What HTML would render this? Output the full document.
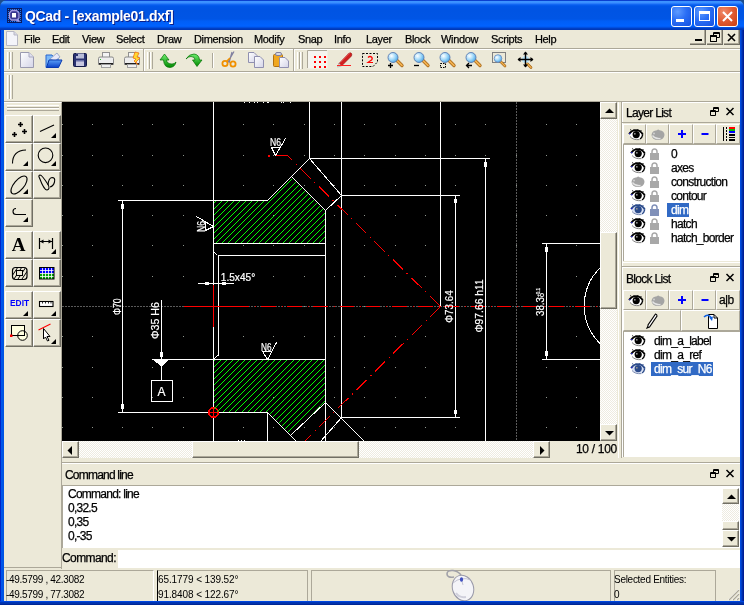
<!DOCTYPE html>
<html><head><meta charset="utf-8">
<style>
*{box-sizing:border-box}
html,body{margin:0;padding:0}
body{width:744px;height:605px;overflow:hidden;position:relative;background:#ECE9D8;font-family:"Liberation Sans",sans-serif;font-size:11px;color:#000}
.a{position:absolute}
.t{position:absolute;white-space:nowrap;line-height:13px;letter-spacing:-0.35px;will-change:transform;-webkit-text-stroke:0.25px currentColor}
.btn{position:absolute;width:28px;height:28px;background:#ECE9D8;border-top:1px solid #fff;border-left:1px solid #fff;border-right:1px solid #8F8C80;border-bottom:1px solid #8F8C80}
.hl{background:#FFF}
.dith{background-color:#EEEBE0;background-image:linear-gradient(45deg,#fff 25%,transparent 25%,transparent 75%,#fff 75%),linear-gradient(45deg,#fff 25%,transparent 25%,transparent 75%,#fff 75%);background-size:2px 2px;background-position:0 0,1px 1px}
.sbb{background:#ECE9D8;border-top:1px solid #fff;border-left:1px solid #fff;border-right:1px solid #716F64;border-bottom:1px solid #716F64;box-shadow:inset -1px -1px 0 #ACA899}
.sbt{background:#ECE9D8;border-top:1px solid #fff;border-left:1px solid #fff;border-right:1px solid #ACA899;border-bottom:1px solid #ACA899}
.lb{position:absolute;width:28px;height:28px;border-top:1px solid #fff;border-left:1px solid #fff;border-right:1px solid #716F64;border-bottom:1px solid #716F64;box-shadow:inset -1px -1px 0 #ACA899}
.sep{position:absolute;background:#ACA899}
</style></head><body>
<!-- window frame -->
<div class="a" style="left:0;top:0;width:744px;height:8px;background:#1C4C8C"></div>
<div class="a" style="left:0;top:0;width:744px;height:30px;border-radius:7px 7px 0 0;background:linear-gradient(#0A3FD0 0px,#0A3FD0 1px,#3D95FF 1px,#3A8EFF 3px,#1A6CF6 4px,#0860F0 5px,#0056E8 6px,#0054E3 10px,#0055E5 19px,#005EF6 21px,#0062FF 26px,#0058F0 27px,#0046D0 28px,#0038B8 29px,#0038B8 30px)"></div>
<div class="a" style="left:0;top:30px;width:4px;height:575px;background:linear-gradient(90deg,#0024C8 0,#0024C8 1px,#0058EE 1px,#0053E0 4px)"></div>
<div class="a" style="left:740px;top:30px;width:4px;height:575px;background:linear-gradient(90deg,#0050E8 0,#0048D8 1px,#0036B8 2px,#00249A 3px,#001890 4px)"></div>
<div class="a" style="left:0;top:601px;width:744px;height:4px;background:linear-gradient(#0046E0 0,#0046E0 1px,#0038B8 1px,#0030A8 3px,#001C80 4px)"></div>

<!-- title -->
<svg class="a" style="left:7px;top:8px" width="15" height="15"><rect width="15" height="15" fill="#0A1A60"/><rect x="1" y="1" width="1" height="1" fill="#1E78F0"/><rect x="1" y="3" width="1" height="1" fill="#1E78F0"/><rect x="1" y="5" width="1" height="1" fill="#1E78F0"/><rect x="1" y="7" width="1" height="1" fill="#1E78F0"/><rect x="1" y="9" width="1" height="1" fill="#1E78F0"/><rect x="1" y="11" width="1" height="1" fill="#1E78F0"/><rect x="1" y="13" width="1" height="1" fill="#1E78F0"/><rect x="3" y="1" width="1" height="1" fill="#1E78F0"/><rect x="3" y="3" width="1" height="1" fill="#1E78F0"/><rect x="3" y="5" width="1" height="1" fill="#1E78F0"/><rect x="3" y="7" width="1" height="1" fill="#1E78F0"/><rect x="3" y="9" width="1" height="1" fill="#1E78F0"/><rect x="3" y="11" width="1" height="1" fill="#1E78F0"/><rect x="3" y="13" width="1" height="1" fill="#1E78F0"/><rect x="5" y="1" width="1" height="1" fill="#1E78F0"/><rect x="5" y="3" width="1" height="1" fill="#1E78F0"/><rect x="5" y="5" width="1" height="1" fill="#1E78F0"/><rect x="5" y="7" width="1" height="1" fill="#1E78F0"/><rect x="5" y="9" width="1" height="1" fill="#1E78F0"/><rect x="5" y="11" width="1" height="1" fill="#1E78F0"/><rect x="5" y="13" width="1" height="1" fill="#1E78F0"/><rect x="7" y="1" width="1" height="1" fill="#1E78F0"/><rect x="7" y="3" width="1" height="1" fill="#1E78F0"/><rect x="7" y="5" width="1" height="1" fill="#1E78F0"/><rect x="7" y="7" width="1" height="1" fill="#1E78F0"/><rect x="7" y="9" width="1" height="1" fill="#1E78F0"/><rect x="7" y="11" width="1" height="1" fill="#1E78F0"/><rect x="7" y="13" width="1" height="1" fill="#1E78F0"/><rect x="9" y="1" width="1" height="1" fill="#1E78F0"/><rect x="9" y="3" width="1" height="1" fill="#1E78F0"/><rect x="9" y="5" width="1" height="1" fill="#1E78F0"/><rect x="9" y="7" width="1" height="1" fill="#1E78F0"/><rect x="9" y="9" width="1" height="1" fill="#1E78F0"/><rect x="9" y="11" width="1" height="1" fill="#1E78F0"/><rect x="9" y="13" width="1" height="1" fill="#1E78F0"/><rect x="11" y="1" width="1" height="1" fill="#1E78F0"/><rect x="11" y="3" width="1" height="1" fill="#1E78F0"/><rect x="11" y="5" width="1" height="1" fill="#1E78F0"/><rect x="11" y="7" width="1" height="1" fill="#1E78F0"/><rect x="11" y="9" width="1" height="1" fill="#1E78F0"/><rect x="11" y="11" width="1" height="1" fill="#1E78F0"/><rect x="11" y="13" width="1" height="1" fill="#1E78F0"/><rect x="13" y="1" width="1" height="1" fill="#1E78F0"/><rect x="13" y="3" width="1" height="1" fill="#1E78F0"/><rect x="13" y="5" width="1" height="1" fill="#1E78F0"/><rect x="13" y="7" width="1" height="1" fill="#1E78F0"/><rect x="13" y="9" width="1" height="1" fill="#1E78F0"/><rect x="13" y="11" width="1" height="1" fill="#1E78F0"/><rect x="13" y="13" width="1" height="1" fill="#1E78F0"/>
<path d="M4.5 2.5 H9.5 L12 5 V10 L10.5 11.5 L12 13 L10.5 13 L9.5 12 H4.5 L2.5 10 V5 Z" fill="#3A3890" stroke="#A098E0" stroke-width="1.3"/>
<rect x="5" y="5" width="4" height="4.5" fill="#FFFFFF"/></svg>
<div class="t" style="left:25px;top:8px;font-size:14px;font-weight:bold;color:#fff;letter-spacing:-0.33px;line-height:16px;-webkit-text-stroke:0;text-shadow:1px 1px 0 #0A1E8A">QCad - [example01.dxf]</div>
<!-- title buttons -->
<div class="a" style="left:671px;top:6px;width:21px;height:21px;border:1px solid #fff;border-radius:3px;background:radial-gradient(circle at 30% 25%,#5E9BFF 0,#2A6EF5 45%,#1450E0 100%)"><div class="a" style="left:4px;top:12px;width:8px;height:3px;background:#fff"></div></div>
<div class="a" style="left:694px;top:6px;width:21px;height:21px;border:1px solid #fff;border-radius:3px;background:radial-gradient(circle at 30% 25%,#5E9BFF 0,#2A6EF5 45%,#1450E0 100%)"><div class="a" style="left:4px;top:4px;width:11px;height:10px;border:1px solid #fff;border-top-width:3px"></div></div>
<div class="a" style="left:717px;top:6px;width:21px;height:21px;border:1px solid #fff;border-radius:3px;background:radial-gradient(circle at 30% 25%,#F08A6A 0,#E05A30 50%,#C83E10 100%)">
<svg class="a" style="left:0;top:0" width="19" height="19"><path d="M5 5 L14 14 M14 5 L5 14" stroke="#fff" stroke-width="2"/></svg></div>
<!-- menubar -->
<div class="a" style="left:4px;top:48px;width:736px;height:1px;background:#ACA899"></div>
<div class="a" style="left:4px;top:49px;width:736px;height:1px;background:#fff"></div>
<svg class="a" style="left:5px;top:31px" width="14" height="15"><path d="M1.5 0.5 H9 L12.5 4 V14.5 H1.5 Z" fill="#F4F4FA" stroke="#B8B8C4"/><path d="M9 0.5 V4 H12.5" fill="#D8D8E8" stroke="#B8B8C4"/></svg>
<div class="t" style="left:24px;top:33px">File</div>
<div class="t" style="left:52px;top:33px">Edit</div>
<div class="t" style="left:82px;top:33px">View</div>
<div class="t" style="left:116px;top:33px">Select</div>
<div class="t" style="left:157px;top:33px">Draw</div>
<div class="t" style="left:194px;top:33px">Dimension</div>
<div class="t" style="left:254px;top:33px">Modify</div>
<div class="t" style="left:298px;top:33px">Snap</div>
<div class="t" style="left:334px;top:33px">Info</div>
<div class="t" style="left:366px;top:33px">Layer</div>
<div class="t" style="left:405px;top:33px">Block</div>
<div class="t" style="left:441px;top:33px">Window</div>
<div class="t" style="left:491px;top:33px">Scripts</div>
<div class="t" style="left:535px;top:33px">Help</div>
<!-- mdi buttons -->
<div class="a" style="left:690px;top:30px;width:16px;height:15px;border-right:1px solid #716F64;border-bottom:1px solid #716F64;box-shadow:inset -1px -1px 0 #ACA899"><div class="a" style="left:5px;top:9px;width:7px;height:2px;background:#000"></div></div>
<div class="a" style="left:707px;top:30px;width:16px;height:15px;border-right:1px solid #716F64;border-bottom:1px solid #716F64;box-shadow:inset -1px -1px 0 #ACA899">
<svg class="a" style="left:3px;top:2px" width="10" height="10"><path d="M3.5 0.5h6v5h-6z M3.5 1.5h6 M0.5 3.5h6v6h-6z M0.5 4.5h6" fill="none" stroke="#000"/><rect x="1" y="5" width="5" height="4" fill="#ECE9D8"/><path d="M0.5 3.5h6v6h-6z M0.5 4.5h6" fill="none" stroke="#000"/></svg></div>
<div class="a" style="left:724px;top:30px;width:16px;height:15px;border-right:1px solid #716F64;border-bottom:1px solid #716F64;box-shadow:inset -1px -1px 0 #ACA899">
<svg class="a" style="left:3px;top:3px" width="10" height="9"><path d="M1 1 L8 8 M8 1 L1 8" stroke="#000" stroke-width="1.6"/></svg></div>
<!-- toolbar rows -->
<div class="a" style="left:4px;top:71px;width:736px;height:1px;background:#ACA899"></div>
<div class="a" style="left:4px;top:72px;width:736px;height:1px;background:#fff"></div>
<div class="a" style="left:4px;top:101px;width:736px;height:1px;background:#ACA899"></div>
<!-- handles -->
<div class="a" style="left:7px;top:52px;width:3px;height:17px;border-left:1px solid #fff;border-right:1px solid #ACA899"></div>
<div class="a" style="left:10px;top:52px;width:3px;height:17px;border-left:1px solid #fff;border-right:1px solid #ACA899"></div>
<div class="a" style="left:7px;top:75px;width:3px;height:24px;border-left:1px solid #fff;border-right:1px solid #ACA899"></div>
<div class="a" style="left:10px;top:75px;width:3px;height:24px;border-left:1px solid #fff;border-right:1px solid #ACA899"></div>
<div class="a" style="left:143px;top:49px;width:1px;height:22px;background:#ACA899"></div>
<div class="a" style="left:144px;top:49px;width:1px;height:22px;background:#fff"></div>
<div class="a" style="left:147px;top:52px;width:3px;height:17px;border-left:1px solid #fff;border-right:1px solid #ACA899"></div>
<div class="a" style="left:150px;top:52px;width:3px;height:17px;border-left:1px solid #fff;border-right:1px solid #ACA899"></div>
<div class="a" style="left:212px;top:53px;width:1px;height:15px;background:#ACA899"></div>
<div class="a" style="left:213px;top:53px;width:1px;height:15px;background:#fff"></div>
<div class="a" style="left:293px;top:49px;width:1px;height:22px;background:#ACA899"></div>
<div class="a" style="left:294px;top:49px;width:1px;height:22px;background:#fff"></div>
<div class="a" style="left:297px;top:52px;width:3px;height:17px;border-left:1px solid #fff;border-right:1px solid #ACA899"></div>
<div class="a" style="left:300px;top:52px;width:3px;height:17px;border-left:1px solid #fff;border-right:1px solid #ACA899"></div>

<!-- toolbar icons -->
<svg class="a" style="left:0;top:49px" width="744" height="22">
<defs>
<linearGradient id="gdoc" x1="0" y1="0" x2="1" y2="1"><stop offset="0" stop-color="#FFFFFF"/><stop offset="1" stop-color="#D4D4E8"/></linearGradient>
<linearGradient id="gblue" x1="0" y1="0" x2="0" y2="1"><stop offset="0" stop-color="#5AA0F8"/><stop offset="1" stop-color="#0A40C8"/></linearGradient>
<radialGradient id="glens" cx="0.35" cy="0.35" r="0.7"><stop offset="0" stop-color="#FFFFFF"/><stop offset="0.5" stop-color="#A8DCFA"/><stop offset="1" stop-color="#4AA8E8"/></radialGradient>
<linearGradient id="ggreen" x1="0" y1="0" x2="0" y2="1"><stop offset="0" stop-color="#70F070"/><stop offset="1" stop-color="#008800"/></linearGradient>
</defs>
<!-- new -->
<path d="M20.5 3.5 H29 L33.5 8 V18.5 H20.5 Z" fill="url(#gdoc)" stroke="#9A9AB0"/><path d="M29 3.5 V8 H33.5" fill="#E0E0F0" stroke="#A8A8C0"/>
<!-- open -->
<path d="M46 6 H52 L53 7.5 H58 V18.5 H46 Z" fill="#7AB8F8" stroke="#2A66D0"/>
<path d="M50 10 L57 4 L60 8 L55 12 Z" fill="#E8E8F8" stroke="#8A9AC0" stroke-width="0.8"/>
<path d="M46.5 18.5 L49 11 H62 L58.5 18.5 Z" fill="url(#gblue)" stroke="#0A3AB0"/>
<!-- save -->
<rect x="73.5" y="4.5" width="13" height="13" rx="1" fill="#2A3270" stroke="#141A48"/>
<rect x="76" y="4.5" width="8" height="5" fill="#B8BCD8"/><rect x="76" y="5" width="2" height="2" fill="#2A3270"/>
<rect x="76" y="11" width="8" height="6" fill="#C8C8E0"/><rect x="76" y="11" width="8" height="1.5" fill="#6A70A8"/>
<!-- print -->
<rect x="102.5" y="3.5" width="7" height="5" fill="#F4F4F4" stroke="#909090"/>
<path d="M98.5 9.5 Q98.5 8 100 8 H112 Q113.5 8 113.5 9.5 V15.5 H98.5 Z" fill="#EEEEEE" stroke="#8A8A8A"/>
<rect x="99" y="14" width="14" height="1.6" fill="#202020"/>
<rect x="101.5" y="15.5" width="9" height="3" fill="#F0F0F0" stroke="#A0A0A0"/>
<rect x="100" y="10" width="1" height="1" fill="#30C030"/>
<!-- print preview -->
<rect x="128.5" y="3.5" width="7" height="5" fill="#F4F4F4" stroke="#909090"/>
<path d="M124.5 9.5 Q124.5 8 126 8 H138 Q139.5 8 139.5 9.5 V15.5 H124.5 Z" fill="#EEEEEE" stroke="#8A8A8A"/>
<rect x="125" y="14" width="14" height="1.6" fill="#202020"/>
<rect x="127.5" y="15.5" width="9" height="3" fill="#F0F0F0" stroke="#A0A0A0"/>
<path d="M135 3 L139 4 L137 8 L140 9 L136 13 L138 16 L134 12 L136 10 L133 9 Z" fill="#FFD830" stroke="#F07010" stroke-width="0.8"/>
<!-- undo -->
<path d="M160 11 L164.5 5 L169 11 H166.5 Q167 15 172 15 Q174.5 15 176 13 Q175 18 170 18.5 Q164 18.5 163.5 11 Z" fill="url(#ggreen)" stroke="#007000" stroke-width="0.7"/>
<!-- redo -->
<path d="M186 10 Q189 5 194 5 Q199 5.5 199.5 11 H202 L197 17.5 L192.5 11 H195 Q195 7.5 191 7.5 Q188 7.5 186 10 Z" fill="url(#ggreen)" stroke="#007000" stroke-width="0.7"/>
<!-- cut -->
<path d="M228 13 L234 2.5 M229 14 L232 3" stroke="#8080A0" stroke-width="1.2"/>
<circle cx="225" cy="14.5" r="2.6" fill="none" stroke="#F09000" stroke-width="1.8"/>
<circle cx="233" cy="15" r="2.6" fill="none" stroke="#F09000" stroke-width="1.8"/>
<path d="M226.5 12.5 L230 9" stroke="#F09000" stroke-width="1.6"/>
<!-- copy -->
<path d="M248.5 3.5 H254 L257 6.5 V13.5 H248.5 Z" fill="url(#gdoc)" stroke="#9090B0"/>
<path d="M254.5 7.5 H260 L263.5 11 V18.5 H254.5 Z" fill="url(#gdoc)" stroke="#9090B0"/>
<!-- paste -->
<rect x="273.5" y="5.5" width="9" height="12" rx="1" fill="#F0A820" stroke="#B07010"/>
<rect x="275.5" y="3.5" width="6" height="3" rx="1.5" fill="#D8D8E0" stroke="#8080A0"/>
<path d="M279.5 8.5 H285 L288.5 12 V18.5 H279.5 Z" fill="url(#gdoc)" stroke="#9090B0"/>
<!-- grid pressed -->
<rect x="307.5" y="1.5" width="20" height="18" fill="#F6F5F0" stroke="none"/>
<path d="M307.5 19 V1.5 H327" fill="none" stroke="#ACA899"/>
<g fill="#FF0000"><rect x="314" y="7" width="2" height="2"/><rect x="314" y="12" width="2" height="2"/><rect x="314" y="17" width="2" height="2"/><rect x="319" y="7" width="2" height="2"/><rect x="319" y="12" width="2" height="2"/><rect x="319" y="17" width="2" height="2"/><rect x="324" y="7" width="2" height="2"/><rect x="324" y="12" width="2" height="2"/><rect x="324" y="17" width="2" height="2"/></g>
<!-- draft pen -->
<path d="M339 14.5 L348.5 4.5 Q350.5 3 351.5 4.5 Q352.5 6 351 7.5 L341.5 17 Z" fill="#D02020" stroke="#901010" stroke-width="0.6"/>
<path d="M340 13.5 L349.5 4" stroke="#F08080" stroke-width="0.8"/>
<path d="M339 14.5 L341.5 17 L337.5 18 Z" fill="#F0F0F0" stroke="#909090" stroke-width="0.5"/>
<rect x="337" y="16" width="14" height="1" fill="#FF2020"/>
<!-- redraw -->
<path d="M362.5 4.5 H377.5 V13 L373 17.5 H362.5 Z" fill="none" stroke="#000" stroke-dasharray="2 1.5"/>
<path d="M368 8.5 Q370 6.5 372 8.5 Q373 10.5 370 12 L368 13.5 H373" fill="none" stroke="#FF0000" stroke-width="1.2"/>
<!-- zoom lenses -->
<g>
<path d="M396.5 11 L402 16.5" stroke="#A06010" stroke-width="3.2" stroke-linecap="round"/><path d="M396.5 11 L402 16.5" stroke="#F0B050" stroke-width="1.8" stroke-linecap="round"/>
<circle cx="393" cy="8.5" r="5" fill="url(#glens)" stroke="#5A7AB0" stroke-width="0.9"/>
<path d="M388 16.5 H393 M390.5 14 V19" stroke="#000" stroke-width="1.3"/>
</g>
<g>
<path d="M422.5 11 L428 16.5" stroke="#A06010" stroke-width="3.2" stroke-linecap="round"/><path d="M422.5 11 L428 16.5" stroke="#F0B050" stroke-width="1.8" stroke-linecap="round"/>
<circle cx="419" cy="8.5" r="5" fill="url(#glens)" stroke="#5A7AB0" stroke-width="0.9"/>
<path d="M414 16.5 H419" stroke="#000" stroke-width="1.3"/>
</g>
<g>
<path d="M448.5 11 L454 16.5" stroke="#A06010" stroke-width="3.2" stroke-linecap="round"/><path d="M448.5 11 L454 16.5" stroke="#F0B050" stroke-width="1.8" stroke-linecap="round"/>
<circle cx="445" cy="8.5" r="5" fill="url(#glens)" stroke="#5A7AB0" stroke-width="0.9"/>
<rect x="440.5" y="14.5" width="5" height="4" fill="none" stroke="#000" stroke-dasharray="1.5 1"/>
</g>
<g>
<path d="M474.5 11 L480 16.5" stroke="#A06010" stroke-width="3.2" stroke-linecap="round"/><path d="M474.5 11 L480 16.5" stroke="#F0B050" stroke-width="1.8" stroke-linecap="round"/>
<circle cx="471" cy="8.5" r="5" fill="url(#glens)" stroke="#5A7AB0" stroke-width="0.9"/>
<path d="M466.5 16.5 H472 M469 14 L466.5 16.5 L469 19" stroke="#000" stroke-width="1.3" fill="none"/>
</g>
<g>
<rect x="492.5" y="3.5" width="13" height="10" fill="none" stroke="#808080"/>
<path d="M500 12 L505 17" stroke="#A06010" stroke-width="2.6" stroke-linecap="round"/><path d="M500 12 L505 17" stroke="#F0B050" stroke-width="1.4" stroke-linecap="round"/>
<circle cx="498" cy="9.5" r="3.8" fill="url(#glens)" stroke="#6A8AC0" stroke-width="0.8"/>
</g>
<g>
<path d="M526 13.5 L531 18.5" stroke="#A06010" stroke-width="2.6" stroke-linecap="round"/><path d="M526 13.5 L531 18.5" stroke="#F0B050" stroke-width="1.4" stroke-linecap="round"/>
<circle cx="525.5" cy="10.5" r="3.5" fill="#B8E4FA"/>
<path d="M525.5 3 V18 M518 10.5 H533" stroke="#000" stroke-width="1.4"/>
<path d="M523 5.5 L525.5 2.5 L528 5.5 Z M523 15.5 L525.5 18.5 L528 15.5 Z M520.5 8 L517.5 10.5 L520.5 13 Z M530.5 8 L533.5 10.5 L530.5 13 Z" fill="#000"/>
</g>
</svg>

<!-- left dock -->
<div class="a" style="left:4px;top:102px;width:58px;height:466px;border-top:1px solid #fff;border-right:1px solid #ACA899;border-bottom:1px solid #ACA899"></div>
<div class="a" style="left:7px;top:105px;width:52px;height:3px;border-top:1px solid #fff;border-bottom:1px solid #ACA899"></div>
<div class="a" style="left:7px;top:108px;width:52px;height:3px;border-top:1px solid #fff;border-bottom:1px solid #ACA899"></div>

<!-- left toolbar buttons -->
<div class="a lb" style="left:5px;top:115px"></div>
<div class="a lb" style="left:33px;top:115px"></div>
<div class="a lb" style="left:5px;top:143px"></div>
<div class="a lb" style="left:33px;top:143px"></div>
<div class="a lb" style="left:5px;top:171px"></div>
<div class="a lb" style="left:33px;top:171px"></div>
<div class="a lb" style="left:5px;top:199px"></div>
<div class="a lb" style="left:5px;top:231px"></div>
<div class="a lb" style="left:33px;top:231px"></div>
<div class="a lb" style="left:5px;top:259px"></div>
<div class="a lb" style="left:33px;top:259px"></div>
<div class="a lb" style="left:5px;top:291px"></div>
<div class="a lb" style="left:33px;top:291px"></div>
<div class="a lb" style="left:5px;top:319px"></div>
<div class="a lb" style="left:33px;top:319px"></div>
<svg class="a" style="left:0;top:0" width="62" height="350"><g stroke="#000" stroke-width="1.6" fill="none"><path d="M18.0 124.5 H23.0 M20.5 122.0 V127.0"/><path d="M22.0 131.5 H27.0 M24.5 129.0 V134.0"/><path d="M12.0 134.5 H17.0 M14.5 132.0 V137.0"/></g><g stroke="#000" stroke-width="1.1" fill="none"><path d="M40 131.5 L54 125"/><path d="M12.5 163.5 Q12.5 150.5 26 150"/><circle cx="45.5" cy="155.3" r="7.3"/><ellipse cx="19" cy="185" rx="11" ry="5" transform="rotate(-50 19 185)"/><path d="M39.5 178 Q38 175.5 40 175 Q42 175 48 184.5 Q50.5 189 47 190 Q44 190 39.5 178 Z"/><path d="M48 185 Q48.5 178 52 177.5 Q55.5 177.5 54.5 182 Q53.5 186 50 187"/><path d="M16 208.5 Q13 208.5 13 211.5 Q13 214.5 16 214.5 H26"/></g><path d="M23 166 H28 V161 Z" fill="#000"/><path d="M51 166 H56 V161 Z" fill="#000"/><path d="M23 194 H28 V189 Z" fill="#000"/><path d="M23 222 H28 V217 Z" fill="#000"/><path d="M51 138 H56 V133 Z" fill="#000"/><path d="M51 254 H56 V249 Z" fill="#000"/><path d="M23 316 H28 V311 Z" fill="#000"/><path d="M51 316 H56 V311 Z" fill="#000"/><path d="M51 344 H56 V339 Z" fill="#000"/><text x="18.5" y="251" text-anchor="middle" font-family="Liberation Serif" font-weight="bold" font-size="19">A</text><path d="M39.5 238 V249 M52.5 238 V249 M40 241.5 H52" stroke="#000" stroke-width="1.2"/><path d="M40 241.5 L43.5 239.5 V243.5 Z M52 241.5 L48.5 239.5 V243.5 Z" fill="#000"/><defs><clipPath id="hc"><rect x="12.5" y="267.5" width="14.5" height="12" rx="3"/></clipPath></defs><g clip-path="url(#hc)" stroke="#000" stroke-width="1"><path d="M8 282 L20 264 M12 282 L24 264 M16 282 L28 264 M20 282 L32 264 M24 282 L36 264"/></g><rect x="12.5" y="267.5" width="14.5" height="12" rx="3" fill="none" stroke="#000" stroke-width="1.2"/><rect x="16.5" y="270.5" width="6" height="5" fill="#ECE9D8" stroke="#000"/><rect x="39" y="267" width="15.5" height="12.5" fill="#000"/><rect x="40" y="268" width="13.5" height="5.5" fill="#0000FF"/><rect x="40" y="273.5" width="13.5" height="5" fill="#00A000"/><path d="M42.5 268 V278.5 M45.5 268 V278.5 M48.5 268 V278.5 M51.5 268 V278.5 M40 270.5 H53.5 M40 273.5 H53.5 M40 276.5 H53.5" stroke="#fff" stroke-width="0.8"/><text x="10" y="306" font-family="Liberation Sans" font-weight="bold" font-size="8.4" fill="#0000FF" letter-spacing="0">EDIT</text><rect x="39.5" y="301.5" width="13.5" height="5" fill="#fff" stroke="#000" stroke-width="1.1"/><path d="M42.5 301.5 V303.5 M45.5 301.5 V303.5 M48.5 301.5 V303.5 M51 301.5 V303.5" stroke="#000" stroke-width="0.8"/><rect x="11.5" y="325.5" width="13" height="10" fill="#FFFFE0"/><circle cx="22.5" cy="335.5" r="4.8" fill="#FFFFE0" stroke="#000" stroke-width="1"/><rect x="11.5" y="325.5" width="13" height="10" fill="none" stroke="#000" stroke-width="1"/><path d="M11.5 335.5 H18" stroke="#000"/><rect x="10" y="334.5" width="2.5" height="2.5" fill="#FF0000"/><path d="M38.5 330 L50.5 324" stroke="#FF0000" stroke-width="1.2"/><path d="M43.5 328.5 V339 L45.5 337 L47.5 341 L49 340.3 L47 336.5 H50 Z" fill="#fff" stroke="#000" stroke-width="1"/></svg>

<!-- canvas -->
<svg class="a" style="left:62px;top:102px" width="538" height="339" viewBox="62 102 538 339" shape-rendering="crispEdges">
<rect x="62" y="102" width="538" height="339" fill="#000"/>
<path d="M62 124h1v1h-1zM62 155h1v1h-1zM62 185h1v1h-1zM62 215h1v1h-1zM62 245h1v1h-1zM62 276h1v1h-1zM62 306h1v1h-1zM62 336h1v1h-1zM62 367h1v1h-1zM62 397h1v1h-1zM62 427h1v1h-1zM92 124h1v1h-1zM92 155h1v1h-1zM92 185h1v1h-1zM92 215h1v1h-1zM92 245h1v1h-1zM92 276h1v1h-1zM92 306h1v1h-1zM92 336h1v1h-1zM92 367h1v1h-1zM92 397h1v1h-1zM92 427h1v1h-1zM122 124h1v1h-1zM122 155h1v1h-1zM122 185h1v1h-1zM122 215h1v1h-1zM122 245h1v1h-1zM122 276h1v1h-1zM122 306h1v1h-1zM122 336h1v1h-1zM122 367h1v1h-1zM122 397h1v1h-1zM122 427h1v1h-1zM152 124h1v1h-1zM152 155h1v1h-1zM152 185h1v1h-1zM152 215h1v1h-1zM152 245h1v1h-1zM152 276h1v1h-1zM152 306h1v1h-1zM152 336h1v1h-1zM152 367h1v1h-1zM152 397h1v1h-1zM152 427h1v1h-1zM183 124h1v1h-1zM183 155h1v1h-1zM183 185h1v1h-1zM183 215h1v1h-1zM183 245h1v1h-1zM183 276h1v1h-1zM183 306h1v1h-1zM183 336h1v1h-1zM183 367h1v1h-1zM183 397h1v1h-1zM183 427h1v1h-1zM213 124h1v1h-1zM213 155h1v1h-1zM213 185h1v1h-1zM213 215h1v1h-1zM213 245h1v1h-1zM213 276h1v1h-1zM213 306h1v1h-1zM213 336h1v1h-1zM213 367h1v1h-1zM213 397h1v1h-1zM213 427h1v1h-1zM243 124h1v1h-1zM243 155h1v1h-1zM243 185h1v1h-1zM243 215h1v1h-1zM243 245h1v1h-1zM243 276h1v1h-1zM243 306h1v1h-1zM243 336h1v1h-1zM243 367h1v1h-1zM243 397h1v1h-1zM243 427h1v1h-1zM273 124h1v1h-1zM273 155h1v1h-1zM273 185h1v1h-1zM273 215h1v1h-1zM273 245h1v1h-1zM273 276h1v1h-1zM273 306h1v1h-1zM273 336h1v1h-1zM273 367h1v1h-1zM273 397h1v1h-1zM273 427h1v1h-1zM304 124h1v1h-1zM304 155h1v1h-1zM304 185h1v1h-1zM304 215h1v1h-1zM304 245h1v1h-1zM304 276h1v1h-1zM304 306h1v1h-1zM304 336h1v1h-1zM304 367h1v1h-1zM304 397h1v1h-1zM304 427h1v1h-1zM334 124h1v1h-1zM334 155h1v1h-1zM334 185h1v1h-1zM334 215h1v1h-1zM334 245h1v1h-1zM334 276h1v1h-1zM334 306h1v1h-1zM334 336h1v1h-1zM334 367h1v1h-1zM334 397h1v1h-1zM334 427h1v1h-1zM364 124h1v1h-1zM364 155h1v1h-1zM364 185h1v1h-1zM364 215h1v1h-1zM364 245h1v1h-1zM364 276h1v1h-1zM364 306h1v1h-1zM364 336h1v1h-1zM364 367h1v1h-1zM364 397h1v1h-1zM364 427h1v1h-1zM395 124h1v1h-1zM395 155h1v1h-1zM395 185h1v1h-1zM395 215h1v1h-1zM395 245h1v1h-1zM395 276h1v1h-1zM395 306h1v1h-1zM395 336h1v1h-1zM395 367h1v1h-1zM395 397h1v1h-1zM395 427h1v1h-1zM425 124h1v1h-1zM425 155h1v1h-1zM425 185h1v1h-1zM425 215h1v1h-1zM425 245h1v1h-1zM425 276h1v1h-1zM425 306h1v1h-1zM425 336h1v1h-1zM425 367h1v1h-1zM425 397h1v1h-1zM425 427h1v1h-1zM455 124h1v1h-1zM455 155h1v1h-1zM455 185h1v1h-1zM455 215h1v1h-1zM455 245h1v1h-1zM455 276h1v1h-1zM455 306h1v1h-1zM455 336h1v1h-1zM455 367h1v1h-1zM455 397h1v1h-1zM455 427h1v1h-1zM485 124h1v1h-1zM485 155h1v1h-1zM485 185h1v1h-1zM485 215h1v1h-1zM485 245h1v1h-1zM485 276h1v1h-1zM485 306h1v1h-1zM485 336h1v1h-1zM485 367h1v1h-1zM485 397h1v1h-1zM485 427h1v1h-1zM516 124h1v1h-1zM516 155h1v1h-1zM516 185h1v1h-1zM516 215h1v1h-1zM516 245h1v1h-1zM516 276h1v1h-1zM516 306h1v1h-1zM516 336h1v1h-1zM516 367h1v1h-1zM516 397h1v1h-1zM516 427h1v1h-1zM546 124h1v1h-1zM546 155h1v1h-1zM546 185h1v1h-1zM546 215h1v1h-1zM546 245h1v1h-1zM546 276h1v1h-1zM546 306h1v1h-1zM546 336h1v1h-1zM546 367h1v1h-1zM546 397h1v1h-1zM546 427h1v1h-1zM576 124h1v1h-1zM576 155h1v1h-1zM576 185h1v1h-1zM576 215h1v1h-1zM576 245h1v1h-1zM576 276h1v1h-1zM576 306h1v1h-1zM576 336h1v1h-1zM576 367h1v1h-1zM576 397h1v1h-1zM576 427h1v1h-1z" fill="#8E968E"/>
<path d="M62 306.5 H600 M516.5 102 V441" stroke="#5A5A5A" stroke-dasharray="2 1" fill="none"/>
<path d="M213.5 102V441M309.5 102V158.5M341.5 102V417.5M440.5 102V306.5M325.5 210.5V441M218.5 255.5V356M267.5 412V441M122.5 200V412M161.5 300V359M161.5 365V381M455.5 195V417M485.5 158V441M546.5 243V359M309 158.5H490M341 195.5H460M118 200.5H268M213 243.5H326M218 255.5H326M152 359.5H326M118 412.5H268M341 417.5H460M542 243.5H600M542 359.5H600M198 283.5H234M267.5 200.5L309.5 158.5M309.5 158.5L341.5 195.5M341.5 195.5L325.5 210.5M291.5 176.5L325.5 210.5M213.5 251.5L217.5 255.5M217.5 355.5L213.5 359.5M267.5 412.5L296.5 441.5M325.5 402.5L364.5 441.5M325.5 402.5L291.5 434.5M341.5 417.5L320.5 441.5M600 268 A53.1 53.1 0 0 0 600 343.5M151.5 380.5H172.5V401.5H151.5ZM271.5 147.5H281M271.5 147.5L275.5 155.5L285.5 138.5M262.5 351.5H272M262.5 351.5L267.5 359.5L276.5 342.5M205.5 221.5V230.5M205.5 230.5L213.5 226.5L196.5 216.5" stroke="#FFFFFF" fill="none"/>
<circle cx="213.5" cy="412.5" r="4.7" stroke="#FF0000" fill="none" stroke-width="1.7"/>
<path d="M208 412.5 H219 M213.5 407 V418" stroke="#FF0000" fill="none"/>
<clipPath id="h1"><polygon points="214,201 268.4,201 291.5,177.9 325,211.4 325,243 214,243"/></clipPath>
<path clip-path="url(#h1)" d="M141 245L210.1 175.9M148 245L217.1 175.9M154 245L223.1 175.9M160 245L229.1 175.9M166 245L235.1 175.9M172 245L241.1 175.9M178 245L247.1 175.9M184 245L253.1 175.9M190 245L259.1 175.9M196 245L265.1 175.9M202 245L271.1 175.9M208 245L277.1 175.9M214 245L283.1 175.9M220 245L289.1 175.9M226 245L295.1 175.9M233 245L302.1 175.9M239 245L308.1 175.9M245 245L314.1 175.9M251 245L320.1 175.9M257 245L326.1 175.9M263 245L332.1 175.9M269 245L338.1 175.9M275 245L344.1 175.9M281 245L350.1 175.9M287 245L356.1 175.9M293 245L362.1 175.9M299 245L368.1 175.9M305 245L374.1 175.9M311 245L380.1 175.9M317 245L386.1 175.9M324 245L393.1 175.9M330 245L399.1 175.9M336 245L405.1 175.9" stroke="#00FF00" fill="none"/>
<clipPath id="h2"><polygon points="214,360 325,360 325,401.6 290.5,434.1 268.4,412 214,412"/></clipPath>
<path clip-path="url(#h2)" d="M132.89999999999998 436.1L211 358M138.89999999999998 436.1L217 358M144.89999999999998 436.1L223 358M150.89999999999998 436.1L229 358M156.89999999999998 436.1L235 358M162.89999999999998 436.1L241 358M168.89999999999998 436.1L247 358M174.89999999999998 436.1L253 358M180.89999999999998 436.1L259 358M186.89999999999998 436.1L265 358M192.89999999999998 436.1L271 358M198.89999999999998 436.1L277 358M204.89999999999998 436.1L283 358M210.89999999999998 436.1L289 358M217.89999999999998 436.1L296 358M223.89999999999998 436.1L302 358M229.89999999999998 436.1L308 358M235.89999999999998 436.1L314 358M241.89999999999998 436.1L320 358M247.89999999999998 436.1L326 358M253.89999999999998 436.1L332 358M259.9 436.1L338 358M265.9 436.1L344 358M271.9 436.1L350 358M277.9 436.1L356 358M283.9 436.1L362 358M289.9 436.1L368 358M295.9 436.1L374 358M302.9 436.1L381 358M308.9 436.1L387 358M314.9 436.1L393 358M320.9 436.1L399 358M326.9 436.1L405 358M332.9 436.1L411 358" stroke="#00FF00" fill="none"/>
<path d="M184 306.5 H235" stroke="#FF0000" fill="none"/>
<path d="M234.8 306.5 H600" stroke="#FF0000" stroke-dasharray="14.5 6 1 4.7" fill="none"/>
<path d="M213.5 285 V327" stroke="#FF0000" fill="none"/>
<path d="M287.5 155.5 L440.5 306.5" stroke="#FF0000" stroke-dasharray="14.5 5 1.2 5.3" stroke-dashoffset="7.9" fill="none"/>
<path d="M440.5 306.5 L300 446" stroke="#FF0000" stroke-dasharray="14.5 5 1.2 5.3" stroke-dashoffset="0" fill="none"/>
<path d="M275.5 155.5 H288" stroke="#FF0000" fill="none"/>
<path d="M268 155h1.5v1.5h-1.5z" fill="#FF0000"/>
<path d="M244 102h1v1h-1zM249 102h1v1h-1zM254 102h1v1h-1zM257 102h1v1h-1zM263 102h1v1h-1zM267 102h1v1h-1zM268 102h1v1h-1zM281 102h1v1h-1zM283 102h1v1h-1zM290 102h1v1h-1zM238 440h1v1h-1zM241 440h1v1h-1zM244 440h1v1h-1z" fill="#fff"/>
<path d="M121 204h3v5h-3z M121 404h3v5h-3z M160 352h3v5h-3z M454 199h3v4h-3z M454 410h3v4h-3z M484 162h3v5h-3z M545 247h3v5h-3z M545 351h3v5h-3z M205 282h4v3h-4z M222 282h4v3h-4z" fill="#FFFFFF"/>
<path d="M152 359 H169 L161.5 366.5 Z" fill="#FFFFFF"/>
<g font-family="Liberation Sans" shape-rendering="auto" style="will-change:transform">
<text transform="translate(120.5,315) rotate(-90)" font-size="10" textLength="16.7" lengthAdjust="spacingAndGlyphs" fill="#FFFFFF" stroke="#FFFFFF" stroke-width="0.2">Φ70</text>
<text transform="translate(158.5,339) rotate(-90)" font-size="10.2" textLength="37" lengthAdjust="spacingAndGlyphs" fill="#FFFFFF" stroke="#FFFFFF" stroke-width="0.2">Φ35 H6</text>
<text transform="translate(453,322.7) rotate(-90)" font-size="10.2" textLength="32.3" lengthAdjust="spacingAndGlyphs" fill="#FFFFFF" stroke="#FFFFFF" stroke-width="0.2">Φ73.64</text>
<text transform="translate(483,332.6) rotate(-90)" font-size="10.2" textLength="53.3" lengthAdjust="spacingAndGlyphs" fill="#FFFFFF" stroke="#FFFFFF" stroke-width="0.2">Φ97.66 h11</text>
<text transform="translate(544,316) rotate(-90)" font-size="10.2" textLength="19" lengthAdjust="spacingAndGlyphs" fill="#FFFFFF" stroke="#FFFFFF" stroke-width="0.2">38.3</text>
<text transform="translate(539.5,297) rotate(-90)" font-size="5.5" textLength="9" lengthAdjust="spacingAndGlyphs" fill="#FFFFFF" stroke="#FFFFFF" stroke-width="0.2">+0.1</text>
<text transform="translate(544,297) rotate(-90)" font-size="5.5" textLength="4" lengthAdjust="spacingAndGlyphs" fill="#FFFFFF" stroke="#FFFFFF" stroke-width="0.2">0</text>
<text x="220.8" y="281.2" font-size="10.2" textLength="34.4" lengthAdjust="spacingAndGlyphs" fill="#FFFFFF" stroke="#FFFFFF" stroke-width="0.2">1.5x45°</text>
<text x="270" y="145.6" font-size="10.2" textLength="11" lengthAdjust="spacingAndGlyphs" fill="#FFFFFF" stroke="#FFFFFF" stroke-width="0.2">N6</text>
<text x="261" y="350.9" font-size="10.2" textLength="10.5" lengthAdjust="spacingAndGlyphs" fill="#FFFFFF" stroke="#FFFFFF" stroke-width="0.2">N6</text>
<text transform="translate(205,232) rotate(-90)" font-size="10.2" textLength="11" lengthAdjust="spacingAndGlyphs" fill="#FFFFFF" stroke="#FFFFFF" stroke-width="0.2">N6</text>
<text x="157.5" y="395.6" font-size="12" textLength="8" lengthAdjust="spacingAndGlyphs" fill="#FFFFFF" stroke="#FFFFFF" stroke-width="0.2">A</text>
</g>
</svg>
<!-- v scrollbar -->
<div class="a dith" style="left:600px;top:102px;width:17px;height:339px"></div>
<div class="a sbb" style="left:600px;top:102px;width:17px;height:17px"><svg class="a" style="left:4px;top:5px" width="9" height="6"><path d="M0 5 L4.5 0.5 L9 5 Z" fill="#000"/></svg></div>
<div class="a sbb" style="left:600px;top:232px;width:17px;height:77px"></div>
<div class="a sbb" style="left:600px;top:424px;width:17px;height:17px"><svg class="a" style="left:4px;top:6px" width="9" height="6"><path d="M0 0 L4.5 4.5 L9 0 Z" fill="#000"/></svg></div>
<!-- h scrollbar -->
<div class="a dith" style="left:62px;top:441px;width:488px;height:17px"></div>
<div class="a sbb" style="left:62px;top:441px;width:17px;height:17px"><svg class="a" style="left:4px;top:4px" width="6" height="9"><path d="M5 0 L0.5 4.5 L5 9 Z" fill="#000"/></svg></div>
<div class="a sbb" style="left:192px;top:441px;width:167px;height:17px"></div>
<div class="a sbb" style="left:533px;top:441px;width:17px;height:17px"><svg class="a" style="left:6px;top:4px" width="6" height="9"><path d="M0 0 L4.5 4.5 L0 9 Z" fill="#000"/></svg></div>
<div class="t" style="left:576px;top:442px;font-size:12px;line-height:14px;letter-spacing:-0.3px">10 / 100</div>
<!-- right dock separators -->
<div class="a" style="left:621px;top:102px;width:1px;height:356px;background:#ACA899"></div>
<div class="a" style="left:618px;top:102px;width:1px;height:356px;background:#fff"></div>
<!-- command dock -->
<div class="a" style="left:62px;top:462px;width:678px;height:1px;background:#ACA899"></div>
<div class="a" style="left:62px;top:463px;width:678px;height:1px;background:#fff"></div>
<div class="a" style="left:61px;top:462px;width:1px;height:107px;background:#ACA899"></div>
<div class="t" style="left:65px;top:468px;font-size:12px;line-height:14px;letter-spacing:-0.8px">Command line</div>
<svg class="a" style="left:710px;top:469px" width="26" height="10"><path d="M3.5 0.5h5v4h-5z M3.5 1.5h5" fill="none" stroke="#000"/><rect x="1" y="4" width="5" height="4" fill="#ECE9D8"/><path d="M0.5 3.5h5v5h-5z M0.5 4.5h5" fill="none" stroke="#000"/><path d="M16.5 1 L23.5 8 M23.5 1 L16.5 8" stroke="#000" stroke-width="1.5"/></svg>
<div class="a" style="left:62px;top:485px;width:678px;height:63px;background:#fff;border-top:1px solid #ACA899;border-left:1px solid #ACA899"></div>
<div class="t" style="left:68px;top:487px;font-size:12px;line-height:14px;letter-spacing:-0.75px">Command: line<br>0,32.5<br>0,35<br>0,-35</div>
<div class="a dith" style="left:722px;top:488px;width:17px;height:59px"></div>
<div class="a sbb" style="left:722px;top:488px;width:17px;height:16px"><svg class="a" style="left:4px;top:5px" width="9" height="6"><path d="M0 5 L4.5 0.5 L9 5 Z" fill="#000"/></svg></div>
<div class="a sbb" style="left:722px;top:521px;width:17px;height:9px"></div>
<div class="a sbb" style="left:722px;top:530px;width:17px;height:17px"><svg class="a" style="left:4px;top:6px" width="9" height="6"><path d="M0 0 L4.5 4.5 L9 0 Z" fill="#000"/></svg></div>
<div class="t" style="left:62px;top:551px;font-size:12px;line-height:14px;letter-spacing:-0.6px">Command:</div>
<div class="a" style="left:118px;top:550px;width:622px;height:18px;background:#fff"></div>
<!-- status bar -->
<div class="a" style="left:6px;top:570px;width:148px;height:31px;border-top:1px solid #ACA899;border-left:1px solid #ACA899;border-right:1px solid #fff"></div>
<div class="a" style="left:157px;top:570px;width:151px;height:31px;border-top:1px solid #ACA899;border-left:1px solid #000;border-right:1px solid #ACA899"></div>
<div class="a" style="left:311px;top:570px;width:300px;height:31px;border-top:1px solid #ACA899;border-left:1px solid #ACA899;border-right:1px solid #ACA899"></div>
<div class="a" style="left:614px;top:570px;width:102px;height:31px;border-top:1px solid #ACA899;border-left:1px solid #ACA899;border-right:1px solid #ACA899"></div>
<div class="t" style="left:6px;top:574px;font-size:10px;line-height:11px;letter-spacing:-0.32px;-webkit-text-stroke:0">-49.5799 , 42.3082</div>
<div class="t" style="left:6px;top:589px;font-size:10px;line-height:11px;letter-spacing:-0.32px;-webkit-text-stroke:0">-49.5799 , 77.3082</div>
<div class="t" style="left:158px;top:574px;font-size:10px;line-height:11px;letter-spacing:-0.1px;-webkit-text-stroke:0">65.1779 &lt; 139.52°</div>
<div class="t" style="left:158px;top:589px;font-size:10px;line-height:11px;letter-spacing:-0.1px;-webkit-text-stroke:0">91.8408 &lt; 122.67°</div>
<div class="t" style="left:614px;top:574px;font-size:10px;line-height:11px;letter-spacing:-0.28px;-webkit-text-stroke:0">Selected Entities:</div>
<div class="t" style="left:614px;top:589px;font-size:10px;line-height:11px;letter-spacing:-0.1px;-webkit-text-stroke:0">0</div>
<svg class="a" style="left:444px;top:569px" width="34" height="32"><path d="M10 8 Q3 9 3 5 Q3 1 9 1.5 Q14 2 17 6" fill="none" stroke="#A0A0A8" stroke-width="1.6"/>
<ellipse cx="19" cy="19" rx="10.5" ry="13" transform="rotate(-18 19 19)" fill="#F4F4F8" stroke="#9898A8" stroke-width="1"/>
<path d="M9 14 Q17 7 27 11" fill="none" stroke="#B8B8C8" stroke-width="0.8"/><path d="M17 9 L19 16" stroke="#B8B8C8" stroke-width="0.8"/>
<ellipse cx="17.5" cy="10.5" rx="1.6" ry="2.3" fill="#4050C0"/>
<path d="M12 24 Q15 29 22 28" fill="none" stroke="#D0D0DC" stroke-width="2"/></svg>
<svg class="a" style="left:725px;top:586px" width="15" height="15"><path d="M14 3 L3 14 M14 7 L7 14 M14 11 L11 14" stroke="#fff" stroke-width="1"/><path d="M14 4 L4 14 M14 8 L8 14 M14 12 L12 14" stroke="#ACA899" stroke-width="1.2"/></svg>

<!-- right dock: layer list -->
<div class="a" style="left:622px;top:102px;width:118px;height:1px;background:#fff"></div>
<div class="a" style="left:622px;top:102px;width:1px;height:164px;background:#fff"></div>
<div class="t" style="left:626px;top:106px;font-size:12px;line-height:14px;letter-spacing:-0.7px">Layer List</div>
<svg class="a" style="left:710px;top:107px" width="26" height="10"><path d="M3.5 0.5h5v4h-5z M3.5 1.5h5" fill="none" stroke="#000"/><rect x="1" y="4" width="5" height="4" fill="#ECE9D8"/><path d="M0.5 3.5h5v5h-5z M0.5 4.5h5" fill="none" stroke="#000"/><path d="M16.5 1 L23.5 8 M23.5 1 L16.5 8" stroke="#000" stroke-width="1.5"/></svg><div class="a" style="left:622px;top:122px;width:118px;height:1px;background:#ACA899"></div>
<div class="a sbt" style="left:623px;top:124px;width:23px;height:20px"></div>
<div class="a sbt" style="left:646px;top:124px;width:23px;height:20px"></div>
<div class="a sbt" style="left:669px;top:124px;width:24px;height:20px"></div>
<div class="a sbt" style="left:693px;top:124px;width:23px;height:20px"></div>
<div class="a sbt" style="left:716px;top:124px;width:24px;height:20px"></div>
<svg class="a" style="left:628px;top:129px" width="16" height="12"><path d="M1.5 6 Q4 2 8 2 Q12.5 2 14.5 6 Q12 10.5 8 10.5 Q4 10.5 1.5 6 Z" fill="#fff"/><path d="M1 5 Q4 1.2 8 1.2 Q12.5 1.2 14.8 5.5" stroke="#000" stroke-width="1.8" fill="none"/><path d="M3 1.5 L2.5 0.3 M6 0.8 V0 M9.5 0.8 L10 0 M12.5 2 L13.5 1" stroke="#000" stroke-width="0.9"/><circle cx="8.2" cy="5.6" r="3.6" fill="#000"/><rect x="6" y="4" width="1.6" height="1.6" fill="#909090"/><path d="M14.8 5.5 Q14 9 12 10" stroke="#000" stroke-width="1.3" fill="none"/><path d="M2 7.5 Q5 11.2 11.5 10.6" stroke="#808080" stroke-width="1" fill="none"/><rect x="1" y="4" width="1.5" height="1.2" fill="#2020C0"/></svg><svg class="a" style="left:650px;top:129px" width="16" height="12"><path d="M1.5 6 Q2 1.5 7 1.2 Q8 0 9.5 1.2 Q14.5 1.8 14.5 6 Q14 11 8 11 Q2 11 1.5 6 Z" fill="#A4A4A4"/><path d="M2.5 6.5 Q5 10 10.5 9.5" stroke="#E4E4E4" stroke-width="1.3" fill="none"/><circle cx="4" cy="4.5" r="1" fill="#D0D0D0"/></svg><svg class="a" style="left:669px;top:124px" width="48" height="20"><path d="M13 6 V14 M9 10 H17" stroke="#0000FF" stroke-width="2"/><path d="M32.5 10 H39.5" stroke="#0000FF" stroke-width="2"/></svg><svg class="a" style="left:716px;top:124px" width="24" height="20" shape-rendering="crispEdges"><rect x="7" y="3" width="1" height="14" fill="#000"/><path d="M10.5 3 V17" stroke="#000" stroke-dasharray="2 1"/><rect x="13" y="3" width="6" height="2" fill="#FF0000"/><rect x="13" y="5" width="6" height="2" fill="#00C000"/><rect x="13" y="7" width="6" height="2" fill="#0000FF"/><rect x="13" y="10" width="6" height="2" fill="#000"/><rect x="13" y="13" width="6" height="1" fill="#000"/><rect x="13" y="15" width="6" height="2" fill="#000"/></svg>
<div class="a" style="left:623px;top:144px;width:117px;height:117px;background:#fff;border-top:1px solid #ACA899;border-left:1px solid #ACA899"></div>
<svg class="a" style="left:630px;top:148px" width="16" height="12"><path d="M1.5 6 Q4 2 8 2 Q12.5 2 14.5 6 Q12 10.5 8 10.5 Q4 10.5 1.5 6 Z" fill="#fff"/><path d="M1 5 Q4 1.2 8 1.2 Q12.5 1.2 14.8 5.5" stroke="#000" stroke-width="1.8" fill="none"/><path d="M3 1.5 L2.5 0.3 M6 0.8 V0 M9.5 0.8 L10 0 M12.5 2 L13.5 1" stroke="#000" stroke-width="0.9"/><circle cx="8.2" cy="5.6" r="3.6" fill="#000"/><rect x="6" y="4" width="1.6" height="1.6" fill="#909090"/><path d="M14.8 5.5 Q14 9 12 10" stroke="#000" stroke-width="1.3" fill="none"/><path d="M2 7.5 Q5 11.2 11.5 10.6" stroke="#808080" stroke-width="1" fill="none"/><rect x="1" y="4" width="1.5" height="1.2" fill="#2020C0"/></svg><svg class="a" style="left:650px;top:148px" width="9" height="12"><path d="M2 5.5 V3.8 Q2 1 4.5 1 Q7 1 7 3.8 V5.5" fill="none" stroke="#A8A8A8" stroke-width="1.5"/><rect x="0" y="5" width="9" height="7" fill="#A8A8A8"/></svg>
<svg class="a" style="left:630px;top:162px" width="16" height="12"><path d="M1.5 6 Q4 2 8 2 Q12.5 2 14.5 6 Q12 10.5 8 10.5 Q4 10.5 1.5 6 Z" fill="#fff"/><path d="M1 5 Q4 1.2 8 1.2 Q12.5 1.2 14.8 5.5" stroke="#000" stroke-width="1.8" fill="none"/><path d="M3 1.5 L2.5 0.3 M6 0.8 V0 M9.5 0.8 L10 0 M12.5 2 L13.5 1" stroke="#000" stroke-width="0.9"/><circle cx="8.2" cy="5.6" r="3.6" fill="#000"/><rect x="6" y="4" width="1.6" height="1.6" fill="#909090"/><path d="M14.8 5.5 Q14 9 12 10" stroke="#000" stroke-width="1.3" fill="none"/><path d="M2 7.5 Q5 11.2 11.5 10.6" stroke="#808080" stroke-width="1" fill="none"/><rect x="1" y="4" width="1.5" height="1.2" fill="#2020C0"/></svg><svg class="a" style="left:650px;top:162px" width="9" height="12"><path d="M2 5.5 V3.8 Q2 1 4.5 1 Q7 1 7 3.8 V5.5" fill="none" stroke="#A8A8A8" stroke-width="1.5"/><rect x="0" y="5" width="9" height="7" fill="#A8A8A8"/></svg>
<svg class="a" style="left:630px;top:176px" width="16" height="12"><path d="M1.5 6 Q2 1.5 7 1.2 Q8 0 9.5 1.2 Q14.5 1.8 14.5 6 Q14 11 8 11 Q2 11 1.5 6 Z" fill="#A4A4A4"/><path d="M2.5 6.5 Q5 10 10.5 9.5" stroke="#E4E4E4" stroke-width="1.3" fill="none"/><circle cx="4" cy="4.5" r="1" fill="#D0D0D0"/></svg><svg class="a" style="left:650px;top:176px" width="9" height="12"><path d="M2 5.5 V3.8 Q2 1 4.5 1 Q7 1 7 3.8 V5.5" fill="none" stroke="#A8A8A8" stroke-width="1.5"/><rect x="0" y="5" width="9" height="7" fill="#A8A8A8"/></svg>
<svg class="a" style="left:630px;top:190px" width="16" height="12"><path d="M1.5 6 Q4 2 8 2 Q12.5 2 14.5 6 Q12 10.5 8 10.5 Q4 10.5 1.5 6 Z" fill="#fff"/><path d="M1 5 Q4 1.2 8 1.2 Q12.5 1.2 14.8 5.5" stroke="#000" stroke-width="1.8" fill="none"/><path d="M3 1.5 L2.5 0.3 M6 0.8 V0 M9.5 0.8 L10 0 M12.5 2 L13.5 1" stroke="#000" stroke-width="0.9"/><circle cx="8.2" cy="5.6" r="3.6" fill="#000"/><rect x="6" y="4" width="1.6" height="1.6" fill="#909090"/><path d="M14.8 5.5 Q14 9 12 10" stroke="#000" stroke-width="1.3" fill="none"/><path d="M2 7.5 Q5 11.2 11.5 10.6" stroke="#808080" stroke-width="1" fill="none"/><rect x="1" y="4" width="1.5" height="1.2" fill="#2020C0"/></svg><svg class="a" style="left:650px;top:190px" width="9" height="12"><path d="M2 5.5 V3.8 Q2 1 4.5 1 Q7 1 7 3.8 V5.5" fill="none" stroke="#A8A8A8" stroke-width="1.5"/><rect x="0" y="5" width="9" height="7" fill="#A8A8A8"/></svg>
<svg class="a" style="left:630px;top:204px" width="16" height="12"><path d="M1.5 6 Q4 2 8 2 Q12.5 2 14.5 6 Q12 10.5 8 10.5 Q4 10.5 1.5 6 Z" fill="#D8E0F4"/><path d="M1 5 Q4 1.2 8 1.2 Q12.5 1.2 14.8 5.5" stroke="#2A4A8A" stroke-width="1.8" fill="none"/><path d="M3 1.5 L2.5 0.3 M6 0.8 V0 M9.5 0.8 L10 0 M12.5 2 L13.5 1" stroke="#2A4A8A" stroke-width="0.9"/><circle cx="8.2" cy="5.6" r="3.6" fill="#2A4A8A"/><rect x="6" y="4" width="1.6" height="1.6" fill="#909090"/><path d="M14.8 5.5 Q14 9 12 10" stroke="#2A4A8A" stroke-width="1.3" fill="none"/><path d="M2 7.5 Q5 11.2 11.5 10.6" stroke="#7A8AB0" stroke-width="1" fill="none"/><rect x="1" y="4" width="1.5" height="1.2" fill="#2020C0"/></svg><svg class="a" style="left:650px;top:204px" width="9" height="12"><path d="M2 5.5 V3.8 Q2 1 4.5 1 Q7 1 7 3.8 V5.5" fill="none" stroke="#8090B8" stroke-width="1.5"/><rect x="0" y="5" width="9" height="7" fill="#8090B8"/></svg>
<svg class="a" style="left:630px;top:218px" width="16" height="12"><path d="M1.5 6 Q4 2 8 2 Q12.5 2 14.5 6 Q12 10.5 8 10.5 Q4 10.5 1.5 6 Z" fill="#fff"/><path d="M1 5 Q4 1.2 8 1.2 Q12.5 1.2 14.8 5.5" stroke="#000" stroke-width="1.8" fill="none"/><path d="M3 1.5 L2.5 0.3 M6 0.8 V0 M9.5 0.8 L10 0 M12.5 2 L13.5 1" stroke="#000" stroke-width="0.9"/><circle cx="8.2" cy="5.6" r="3.6" fill="#000"/><rect x="6" y="4" width="1.6" height="1.6" fill="#909090"/><path d="M14.8 5.5 Q14 9 12 10" stroke="#000" stroke-width="1.3" fill="none"/><path d="M2 7.5 Q5 11.2 11.5 10.6" stroke="#808080" stroke-width="1" fill="none"/><rect x="1" y="4" width="1.5" height="1.2" fill="#2020C0"/></svg><svg class="a" style="left:650px;top:218px" width="9" height="12"><path d="M2 5.5 V3.8 Q2 1 4.5 1 Q7 1 7 3.8 V5.5" fill="none" stroke="#A8A8A8" stroke-width="1.5"/><rect x="0" y="5" width="9" height="7" fill="#A8A8A8"/></svg>
<svg class="a" style="left:630px;top:232px" width="16" height="12"><path d="M1.5 6 Q4 2 8 2 Q12.5 2 14.5 6 Q12 10.5 8 10.5 Q4 10.5 1.5 6 Z" fill="#fff"/><path d="M1 5 Q4 1.2 8 1.2 Q12.5 1.2 14.8 5.5" stroke="#000" stroke-width="1.8" fill="none"/><path d="M3 1.5 L2.5 0.3 M6 0.8 V0 M9.5 0.8 L10 0 M12.5 2 L13.5 1" stroke="#000" stroke-width="0.9"/><circle cx="8.2" cy="5.6" r="3.6" fill="#000"/><rect x="6" y="4" width="1.6" height="1.6" fill="#909090"/><path d="M14.8 5.5 Q14 9 12 10" stroke="#000" stroke-width="1.3" fill="none"/><path d="M2 7.5 Q5 11.2 11.5 10.6" stroke="#808080" stroke-width="1" fill="none"/><rect x="1" y="4" width="1.5" height="1.2" fill="#2020C0"/></svg><svg class="a" style="left:650px;top:232px" width="9" height="12"><path d="M2 5.5 V3.8 Q2 1 4.5 1 Q7 1 7 3.8 V5.5" fill="none" stroke="#A8A8A8" stroke-width="1.5"/><rect x="0" y="5" width="9" height="7" fill="#A8A8A8"/></svg>
<div class="a" style="left:667px;top:203px;width:22px;height:14px;background:#316AC5"></div>
<div class="t" style="left:671px;top:147px;font-size:12px;line-height:14px;letter-spacing:-0.7px">0<br>axes<br>construction<br>contour<br><span style="color:#fff">dim</span><br>hatch<br>hatch_border</div>
<div class="a" style="left:622px;top:262px;width:118px;height:1px;background:#fff"></div>
<div class="a" style="left:622px;top:266px;width:118px;height:1px;background:#ACA899"></div>
<div class="a" style="left:622px;top:267px;width:118px;height:1px;background:#fff"></div>
<div class="a" style="left:622px;top:267px;width:1px;height:190px;background:#fff"></div>
<!-- block list -->
<div class="t" style="left:626px;top:272px;font-size:12px;line-height:14px;letter-spacing:-0.7px">Block List</div>
<svg class="a" style="left:710px;top:273px" width="26" height="10"><path d="M3.5 0.5h5v4h-5z M3.5 1.5h5" fill="none" stroke="#000"/><rect x="1" y="4" width="5" height="4" fill="#ECE9D8"/><path d="M0.5 3.5h5v5h-5z M0.5 4.5h5" fill="none" stroke="#000"/><path d="M16.5 1 L23.5 8 M23.5 1 L16.5 8" stroke="#000" stroke-width="1.5"/></svg><div class="a sbt" style="left:623px;top:290px;width:23px;height:20px"></div>
<div class="a sbt" style="left:646px;top:290px;width:23px;height:20px"></div>
<div class="a sbt" style="left:669px;top:290px;width:24px;height:20px"></div>
<div class="a sbt" style="left:693px;top:290px;width:23px;height:20px"></div>
<div class="a sbt" style="left:716px;top:290px;width:24px;height:20px"></div>
<svg class="a" style="left:628px;top:295px" width="16" height="12"><path d="M1.5 6 Q4 2 8 2 Q12.5 2 14.5 6 Q12 10.5 8 10.5 Q4 10.5 1.5 6 Z" fill="#fff"/><path d="M1 5 Q4 1.2 8 1.2 Q12.5 1.2 14.8 5.5" stroke="#000" stroke-width="1.8" fill="none"/><path d="M3 1.5 L2.5 0.3 M6 0.8 V0 M9.5 0.8 L10 0 M12.5 2 L13.5 1" stroke="#000" stroke-width="0.9"/><circle cx="8.2" cy="5.6" r="3.6" fill="#000"/><rect x="6" y="4" width="1.6" height="1.6" fill="#909090"/><path d="M14.8 5.5 Q14 9 12 10" stroke="#000" stroke-width="1.3" fill="none"/><path d="M2 7.5 Q5 11.2 11.5 10.6" stroke="#808080" stroke-width="1" fill="none"/><rect x="1" y="4" width="1.5" height="1.2" fill="#2020C0"/></svg><svg class="a" style="left:650px;top:295px" width="16" height="12"><path d="M1.5 6 Q2 1.5 7 1.2 Q8 0 9.5 1.2 Q14.5 1.8 14.5 6 Q14 11 8 11 Q2 11 1.5 6 Z" fill="#A4A4A4"/><path d="M2.5 6.5 Q5 10 10.5 9.5" stroke="#E4E4E4" stroke-width="1.3" fill="none"/><circle cx="4" cy="4.5" r="1" fill="#D0D0D0"/></svg><svg class="a" style="left:669px;top:290px" width="48" height="20"><path d="M13 6 V14 M9 10 H17" stroke="#0000FF" stroke-width="2"/><path d="M32.5 10 H39.5" stroke="#0000FF" stroke-width="2"/></svg><div class="t" style="left:719px;top:293px;font-size:12px;line-height:14px;letter-spacing:-0.6px">a|b</div>
<div class="a sbt" style="left:623px;top:310px;width:58px;height:21px"></div>
<div class="a sbt" style="left:681px;top:310px;width:59px;height:21px"></div>
<svg class="a" style="left:645px;top:312px" width="14" height="17"><path d="M3 14 L2 16 L4.5 15 L12 4 Q12 2 10.5 2 L3 13 Z" fill="#fff" stroke="#000" stroke-width="1.1"/></svg>
<svg class="a" style="left:702px;top:312px" width="18" height="17"><path d="M6.5 2.5 H12 L15.5 6 V16.5 H6.5 Z" fill="#fff" stroke="#000"/><path d="M12 2.5 V6 H15.5" fill="none" stroke="#000"/><path d="M2 5 Q6 1 9.5 6" fill="none" stroke="#1060E0" stroke-width="1.5"/><path d="M7 5.5 L11 4.5 L10 9 Z" fill="#1060E0"/></svg>
<div class="a" style="left:623px;top:331px;width:117px;height:126px;background:#fff;border-top:1px solid #ACA899;border-left:1px solid #ACA899"></div>
<svg class="a" style="left:630px;top:335px" width="16" height="12"><path d="M1.5 6 Q4 2 8 2 Q12.5 2 14.5 6 Q12 10.5 8 10.5 Q4 10.5 1.5 6 Z" fill="#fff"/><path d="M1 5 Q4 1.2 8 1.2 Q12.5 1.2 14.8 5.5" stroke="#000" stroke-width="1.8" fill="none"/><path d="M3 1.5 L2.5 0.3 M6 0.8 V0 M9.5 0.8 L10 0 M12.5 2 L13.5 1" stroke="#000" stroke-width="0.9"/><circle cx="8.2" cy="5.6" r="3.6" fill="#000"/><rect x="6" y="4" width="1.6" height="1.6" fill="#909090"/><path d="M14.8 5.5 Q14 9 12 10" stroke="#000" stroke-width="1.3" fill="none"/><path d="M2 7.5 Q5 11.2 11.5 10.6" stroke="#808080" stroke-width="1" fill="none"/><rect x="1" y="4" width="1.5" height="1.2" fill="#2020C0"/></svg><svg class="a" style="left:630px;top:349px" width="16" height="12"><path d="M1.5 6 Q4 2 8 2 Q12.5 2 14.5 6 Q12 10.5 8 10.5 Q4 10.5 1.5 6 Z" fill="#fff"/><path d="M1 5 Q4 1.2 8 1.2 Q12.5 1.2 14.8 5.5" stroke="#000" stroke-width="1.8" fill="none"/><path d="M3 1.5 L2.5 0.3 M6 0.8 V0 M9.5 0.8 L10 0 M12.5 2 L13.5 1" stroke="#000" stroke-width="0.9"/><circle cx="8.2" cy="5.6" r="3.6" fill="#000"/><rect x="6" y="4" width="1.6" height="1.6" fill="#909090"/><path d="M14.8 5.5 Q14 9 12 10" stroke="#000" stroke-width="1.3" fill="none"/><path d="M2 7.5 Q5 11.2 11.5 10.6" stroke="#808080" stroke-width="1" fill="none"/><rect x="1" y="4" width="1.5" height="1.2" fill="#2020C0"/></svg><svg class="a" style="left:630px;top:363px" width="16" height="12"><path d="M1.5 6 Q4 2 8 2 Q12.5 2 14.5 6 Q12 10.5 8 10.5 Q4 10.5 1.5 6 Z" fill="#D8E0F4"/><path d="M1 5 Q4 1.2 8 1.2 Q12.5 1.2 14.8 5.5" stroke="#2A4A8A" stroke-width="1.8" fill="none"/><path d="M3 1.5 L2.5 0.3 M6 0.8 V0 M9.5 0.8 L10 0 M12.5 2 L13.5 1" stroke="#2A4A8A" stroke-width="0.9"/><circle cx="8.2" cy="5.6" r="3.6" fill="#2A4A8A"/><rect x="6" y="4" width="1.6" height="1.6" fill="#909090"/><path d="M14.8 5.5 Q14 9 12 10" stroke="#2A4A8A" stroke-width="1.3" fill="none"/><path d="M2 7.5 Q5 11.2 11.5 10.6" stroke="#7A8AB0" stroke-width="1" fill="none"/><rect x="1" y="4" width="1.5" height="1.2" fill="#2020C0"/></svg>
<div class="a" style="left:651px;top:362px;width:62px;height:14px;background:#316AC5"></div>
<div class="t" style="left:654px;top:334px;font-size:12px;line-height:14px;letter-spacing:-0.7px">dim_a_label<br>dim_a_ref<br><span style="color:#fff">dim_sur_N6</span></div>
<!-- end right dock -->
</body></html>
